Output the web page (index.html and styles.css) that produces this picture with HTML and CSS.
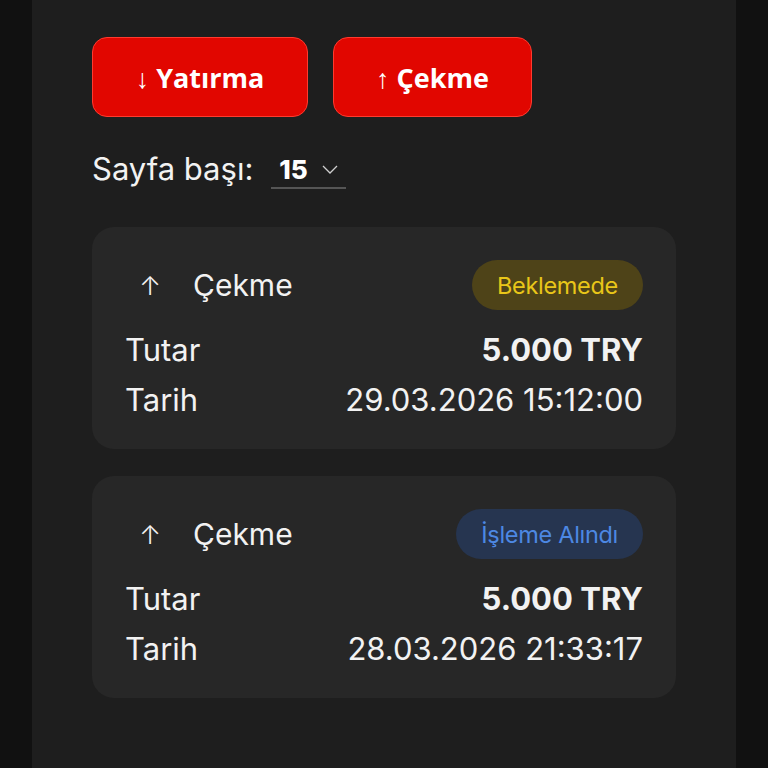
FILE: index.html
```html
<!DOCTYPE html>
<html lang="tr">
<head>
<meta charset="utf-8">
<link rel="stylesheet" href="styles.css">
</head>
<body>
<main class="page">
  <div class="actions">
    <button class="btn">↓ Yatırma</button>
    <button class="btn">↑ Çekme</button>
  </div>
  <div class="perpage">
    <span class="perpage-label">Sayfa başı:</span>
    <span class="select">
      <span class="select-value">15</span>
      <svg class="chev" width="16" height="9" viewBox="0 0 16 9"><path d="M1 1l7 7 7-7" fill="none" stroke="#cfcfcf" stroke-width="1.3"/></svg>
    </span>
  </div>
  <div class="list">
    <div class="card">
      <div class="card-head">
        <span class="type-icon">↑</span>
        <span class="type-name">Çekme</span>
        <span class="badge badge-pending">Beklemede</span>
      </div>
      <div class="row"><span>Tutar</span><span class="amount">5.000 TRY</span></div>
      <div class="row"><span>Tarih</span><span>29.03.2026 15:12:00</span></div>
    </div>
    <div class="card">
      <div class="card-head">
        <span class="type-icon">↑</span>
        <span class="type-name">Çekme</span>
        <span class="badge badge-processing">İşleme Alındı</span>
      </div>
      <div class="row"><span>Tutar</span><span class="amount">5.000 TRY</span></div>
      <div class="row"><span>Tarih</span><span>28.03.2026 21:33:17</span></div>
    </div>
  </div>
</main>
</body>
</html>
```
FILE: styles.css
```css
* { box-sizing: border-box; }
html, body { margin: 0; padding: 0; background: #111111; height: 100%; }
body { font-family: Inter, "Noto Sans", sans-serif; color: #f2f2f2; }
.page {
  width: 704px;
  margin-left: 32px;
  min-height: 768px;
  background: #1e1e1e;
  padding: 37px 60px 0 60px;
}
.actions { display: flex; gap: 25px; }
.btn {
  height: 80px;
  padding: 0;
  background: #e10600;
  border: 1px solid #ff3a2e;
  border-radius: 15px;
  color: #ffffff;
  font-family: "Open Sans", sans-serif;
  font-weight: 700;
  font-size: 27px;
}
.btn:first-child { width: 216px; }
.btn:last-child { width: 199px; }
.perpage {
  display: flex;
  align-items: center;
  margin-top: 30px;
  height: 42px;
  font-size: 31px;
}
.perpage-label { color: #f2f2f2; }
.select {
  margin-left: 18px;
  width: 75px;
  height: 38px;
  display: flex;
  align-items: center;
  padding-left: 8px;
  border-bottom: 2px solid #555;
  margin-top: 4px;
}
.select-value { font-weight: 800; font-size: 26px; color: #fff; }
.chev { margin-left: 14px; }
.list { margin-top: 38px; display: flex; flex-direction: column; gap: 27px; }
.card {
  width: 584px;
  background: #272727;
  border-radius: 22px;
  padding: 33px 33px 24px 33px;
}
.card-head { display: flex; align-items: center; height: 50px; margin-bottom: 14px; }
.type-icon { width: 50px; text-align: center; font-size: 26px; font-weight: 300; color: #f2f2f2; }
.type-name { margin-left: 18px; font-size: 30px; flex: 1; }
.badge {
  height: 50px;
  border-radius: 25px;
  display: flex;
  align-items: center;
  padding: 0 25px;
  font-size: 23.5px;
  letter-spacing: -0.3px;
}
.badge-pending { background: #4e4318; color: #e9c619; }
.badge-processing { background: #263550; color: #4d88e3; }
.row {
  display: flex;
  justify-content: space-between;
  align-items: center;
  height: 50px;
  font-size: 31px;
}
.row:last-child { height: 51px; }
.amount { font-weight: 700; }
```
